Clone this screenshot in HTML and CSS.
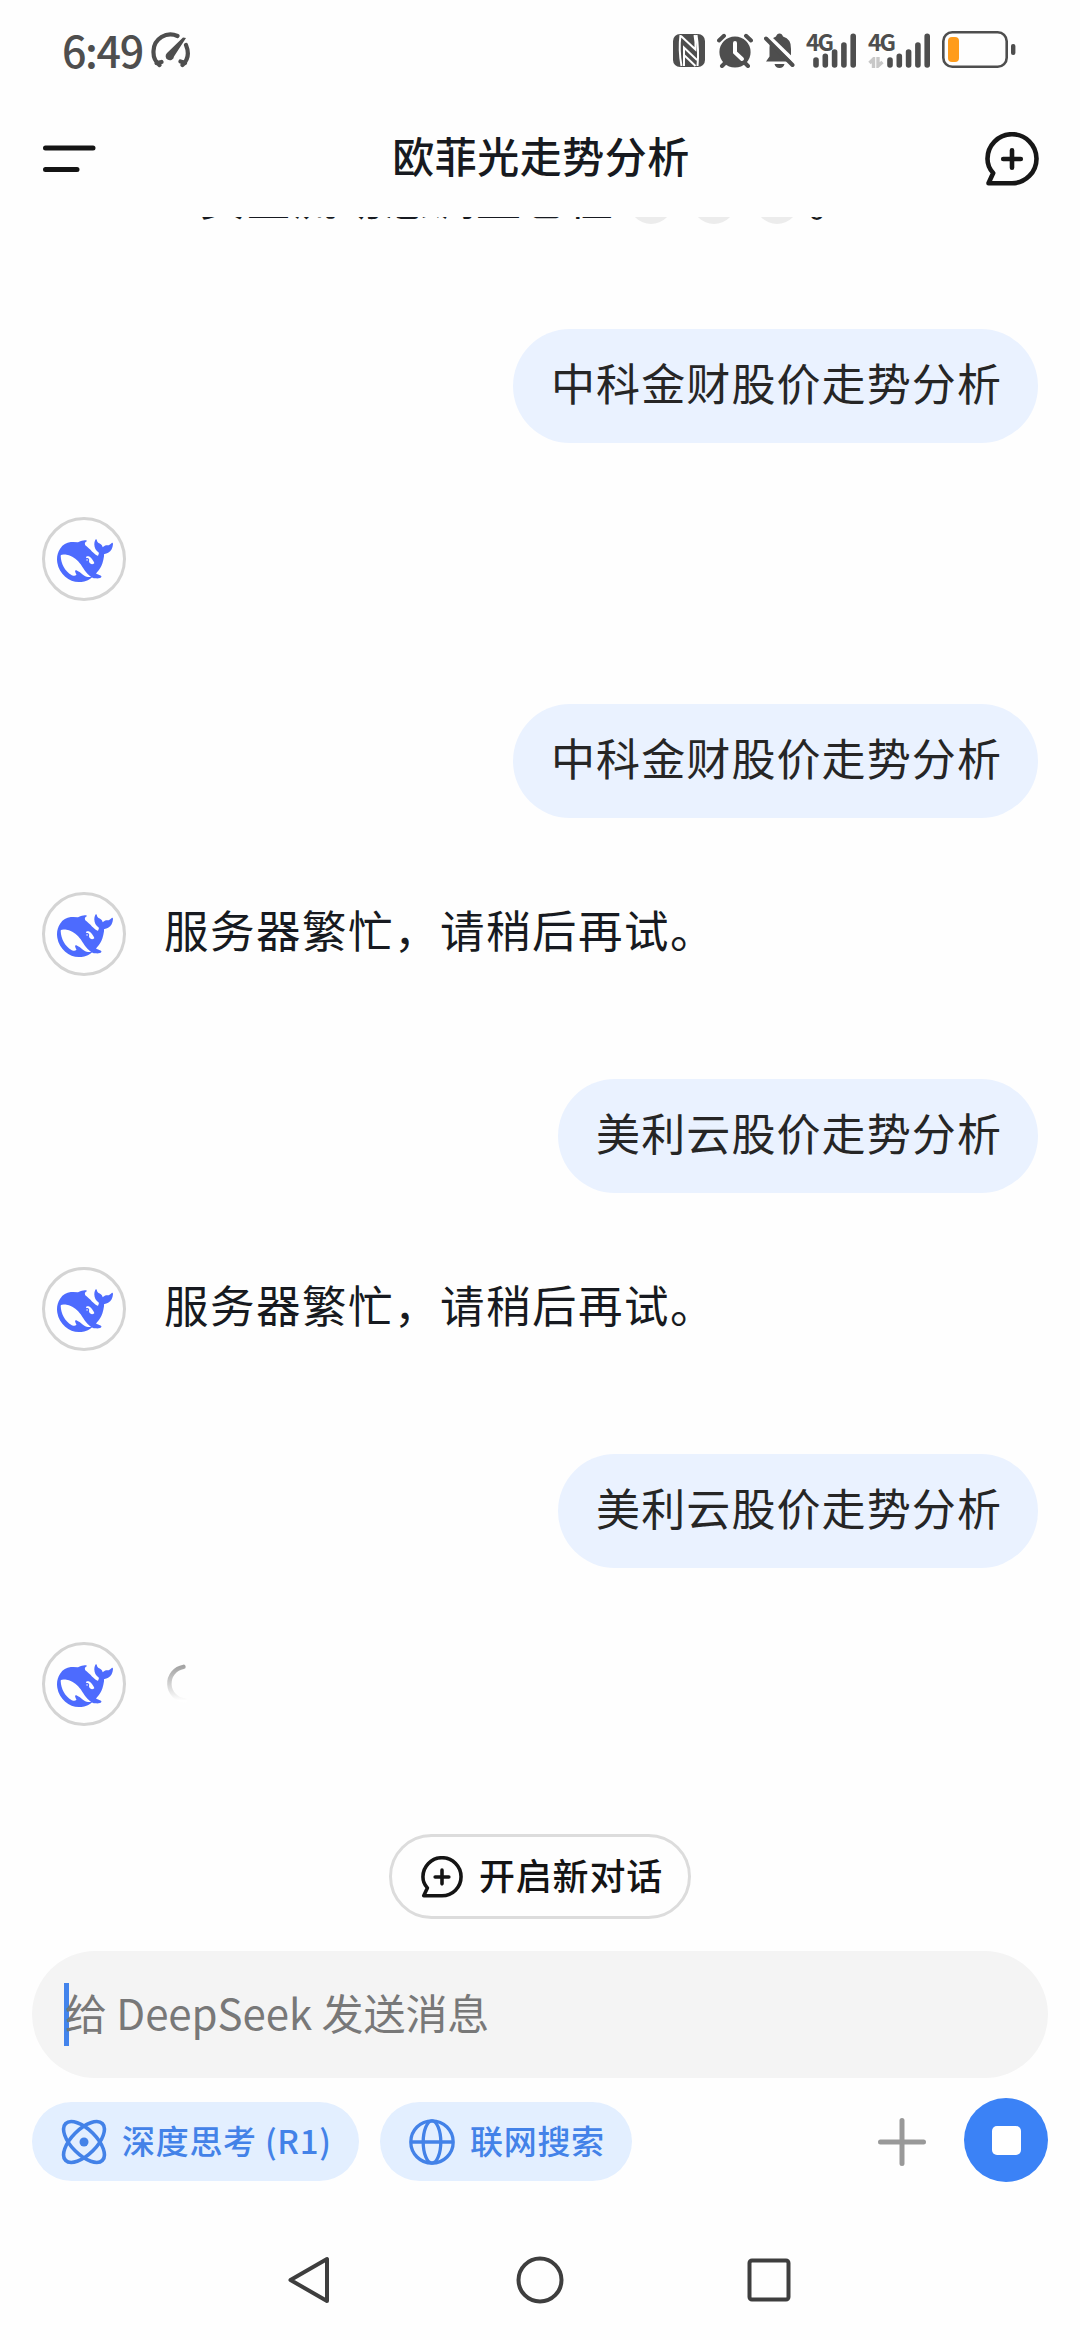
FILE: index.html
```html
<!DOCTYPE html>
<html lang="zh-CN">
<head>
<meta charset="utf-8">
<title>欧菲光走势分析</title>
<link rel="stylesheet" href="styles.css">
</head>
<body>
<svg class="defs" width="0" height="0">
  <symbol id="whale" viewBox="0 0 24 24" preserveAspectRatio="none"><path d="M23.748 4.482c-.254-.124-.364.113-.512.234-.051.039-.094.09-.137.136-.372.397-.806.657-1.373.626-.829-.046-1.537.214-2.163.848-.133-.782-.575-1.248-1.247-1.548-.352-.156-.708-.311-.955-.65-.172-.241-.219-.51-.305-.774-.055-.16-.11-.323-.293-.35-.2-.031-.278.136-.356.276-.313.572-.434 1.202-.422 1.84.027 1.436.633 2.58 1.838 3.393.137.093.172.187.129.323-.082.28-.18.552-.266.833-.055.179-.137.217-.329.14a5.526 5.526 0 01-1.736-1.18c-.857-.828-1.631-1.742-2.597-2.458a11.365 11.365 0 00-.689-.471c-.985-.957.13-1.743.388-1.836.27-.098.093-.432-.779-.428-.872.004-1.67.295-2.687.684a3.055 3.055 0 01-.465.137 9.597 9.597 0 00-2.883-.102c-1.885.21-3.39 1.102-4.497 2.623C.082 8.606-.231 10.684.152 12.85c.403 2.284 1.569 4.175 3.36 5.653 1.858 1.533 3.997 2.284 6.438 2.14 1.482-.085 3.133-.284 4.994-1.86.47.234.962.327 1.78.397.63.059 1.236-.03 1.705-.128.735-.156.684-.837.419-.961-2.155-1.004-1.682-.595-2.113-.926 1.096-1.296 2.746-2.642 3.392-7.003.05-.347.007-.565 0-.845-.004-.17.035-.237.23-.256a4.173 4.173 0 001.545-.475c1.396-.763 1.96-2.015 2.093-3.517.02-.23-.004-.467-.247-.588zM11.581 18c-2.089-1.642-3.102-2.183-3.52-2.16-.392.024-.321.471-.235.763.09.288.207.486.371.739.114.167.192.416-.113.603-.673.416-1.842-.14-1.897-.167-1.361-.802-2.5-1.86-3.301-3.307-.774-1.393-1.224-2.887-1.298-4.482-.02-.386.093-.522.477-.592a4.696 4.696 0 011.529-.039c2.132.312 3.946 1.265 5.468 2.774.868.86 1.525 1.887 2.202 2.891.72 1.066 1.494 2.082 2.48 2.914.348.292.625.514.891.677-.802.09-2.14.11-3.054-.614zm1-6.44a.306.306 0 01.415-.287.302.302 0 01.2.288.306.306 0 01-.31.307.303.303 0 01-.304-.308zm3.11 1.596c-.2.081-.399.151-.59.16a1.245 1.245 0 01-.798-.254c-.274-.23-.47-.358-.552-.758a1.73 1.73 0 01.016-.588c.07-.327-.008-.537-.239-.727-.187-.156-.426-.199-.688-.199a.559.559 0 01-.254-.078c-.11-.054-.2-.19-.114-.358.028-.054.16-.186.192-.21.356-.202.767-.136 1.146.016.352.144.618.408 1.001.782.391.451.462.576.685.914.176.265.336.537.445.848.067.195-.019.354-.25.452z"/></symbol>
  <symbol id="newchat" viewBox="0 0 54 54"><path d="M3.5 51.2L8.2 41Q2.5 35 2.5 27A24.5 24.5 0 1 1 27 51.2Z M27 18.2v17.6M18.2 27h17.6" fill="none" stroke="currentColor" stroke-width="4.6" stroke-linecap="round" stroke-linejoin="round"/></symbol>
  <symbol id="bars" viewBox="0 0 44 35"><path d="M3 27v5M12.3 23.2v8.800M21.600 19v13M30.900 12v20M40.200 3.400v28.600" stroke="currentColor" stroke-width="5.6" stroke-linecap="round"/></symbol>
</svg>
<div class="screen">
  <header class="status">
    <span class="time">6:49</span>
    <svg class="gauge" viewBox="0 0 40 36"><path d="M8.500 33Q2 28 2.500 19A17 17 0 0 1 26.500 4M35 13Q40 25 31.500 33M5.500 31l5-1M34 31l-4.500-1.500" fill="none" stroke="currentColor" stroke-width="4.200" stroke-linecap="round"/><path d="M35 6L23 24.500a4.200 4.200 0 1 1-7-3.500L32 5.500z" fill="currentColor"/></svg>
    <div class="sysicons">
      <svg class="nfc" viewBox="0 0 32 33"><rect width="32" height="33" rx="7" fill="currentColor"/><path d="M7.500 1Q5.500 16 8.500 32M8 2L22.500 15.500Q23 8 21.500 1M24.500 32Q26 16 23.500 1M11 32V13.500L24 26M11 21L22.500 32" fill="none" stroke="#fff" stroke-width="2"/></svg>
      <svg class="alarm" viewBox="0 0 36 35"><circle cx="18" cy="19" r="15.600" fill="currentColor"/><path d="M2 7.500L7 2.800M34 7.500L29 2.800M5 33l5-5M31 33l-5-5" stroke="currentColor" stroke-width="4" stroke-linecap="round"/><path d="M18 10v9.500l7 6.500" fill="none" stroke="#fff" stroke-width="4" stroke-linecap="round"/></svg>
      <svg class="bell" viewBox="0 0 31 35"><path d="M2 28.500l3.500-5V15Q5.500 5.500 12 3.500Q13 .5 15.500 .5T19 3.500Q27.500 6 27 16v7l3 5.500zM10.500 31h10Q19.500 35 15.500 35T10.500 31z" fill="currentColor"/><path d="M3.500 2.500L31 29" stroke="#fff" stroke-width="4"/><path d="M2 5.500L28.500 32" stroke="currentColor" stroke-width="4" stroke-linecap="round"/></svg>
      <div class="signal"><span class="net">4G</span><svg class="bars"><use href="#bars"/></svg></div>
      <div class="signal second"><span class="net">4G</span><svg class="updown" viewBox="0 0 16 11"><path d="M5.500 11V2L1.500 6M10 0v9L14.500 5" fill="none" stroke="#c8c8c8" stroke-width="3.400"/></svg><svg class="bars"><use href="#bars"/></svg></div>
      <svg class="battery" viewBox="0 0 74 38"><rect x="1.300" y="1.300" width="63.400" height="34.400" rx="9" fill="none" stroke="currentColor" stroke-width="2.600"/><rect x="6" y="6" width="11" height="25" rx="4" fill="#ff9c1b"/><rect x="69" y="13" width="4.400" height="11" rx="2" fill="currentColor"/></svg>
    </div>
  </header>
  <nav class="topbar">
    <svg class="menu" viewBox="0 0 54 28"><path d="M2.500 3h47.500M2.500 24.500h31.500" stroke="#141414" stroke-width="5" stroke-linecap="round"/></svg>
    <h1>欧菲光走势分析</h1>
    <svg class="newchat"><use href="#newchat"/></svg>
  </nav>
  <main class="chat">
    <div class="previous"><span>资金流动态调整仓位</span><i></i><i></i><i></i><span class="stop">。</span></div>
    <section class="turn"><p class="bubble">中科金财股价走势分析</p><div class="reply"><span class="avatar"><svg><use href="#whale"/></svg></span></div></section>
    <section class="turn"><p class="bubble">中科金财股价走势分析</p><div class="reply"><span class="avatar"><svg><use href="#whale"/></svg></span><p>服务器繁忙，请稍后再试。</p></div></section>
    <section class="turn"><p class="bubble">美利云股价走势分析</p><div class="reply"><span class="avatar"><svg><use href="#whale"/></svg></span><p>服务器繁忙，请稍后再试。</p></div></section>
    <section class="turn"><p class="bubble">美利云股价走势分析</p><div class="reply"><span class="avatar"><svg><use href="#whale"/></svg></span><svg class="spinner" viewBox="0 0 26 40"><defs><linearGradient id="fade" x1="0" y1="0" x2="0" y2="1"><stop offset="0" stop-color="#a4a4a4"/><stop offset="1" stop-color="#fff"/></linearGradient></defs><path d="M18.500 2.800A17 17 0 0 0 20 36.500" fill="none" stroke="url(#fade)" stroke-width="4.400" stroke-linecap="round"/></svg></div></section>
  </main>
  <button class="start"><svg><use href="#newchat"/></svg><span>开启新对话</span></button>
  <div class="input"><span class="placeholder">给 DeepSeek 发送消息</span></div>
  <div class="tools">
    <span class="chip"><svg class="atom" viewBox="0 0 46 46" fill="none" stroke="currentColor" stroke-width="3.600"><ellipse cx="23" cy="23" rx="26" ry="12.500" transform="rotate(45 23 23)"/><ellipse cx="23" cy="23" rx="26" ry="12.500" transform="rotate(-45 23 23)"/><circle cx="23" cy="23" r="4.500" fill="currentColor" stroke="none"/></svg><span>深度思考 (R1)</span></span>
    <span class="chip web"><svg class="globe" viewBox="0 0 46 46" fill="none" stroke="currentColor" stroke-width="3.300"><circle cx="23" cy="23" r="21.200"/><ellipse cx="23" cy="23" rx="8.800" ry="21.200"/><path d="M2 23h42"/></svg><span>联网搜索</span></span>
    <svg class="plus" viewBox="0 0 48 48"><path d="M24 2.500v43M2.500 24h43" stroke="#999" stroke-width="5" stroke-linecap="round"/></svg>
    <span class="halt"><i></i></span>
  </div>
  <footer class="sysnav">
    <svg viewBox="0 0 48 48"><path d="M40 3V45L3.500 24z"/></svg>
    <svg viewBox="0 0 48 48"><circle cx="24" cy="24" r="21.500"/></svg>
    <svg viewBox="0 0 48 48"><rect x="4.500" y="4.500" width="39" height="39" rx="2.500"/></svg>
  </footer>
</div>
</body>
</html>
```
FILE: styles.css
```css
* { box-sizing: border-box; }
body { margin: 0; background: #fefefe; font-family: "Noto Sans CJK SC", "Noto Sans", sans-serif; color: #171a20; }
p, h1 { margin: 0; }
svg { display: block; flex: none; }
.defs { position: absolute; }
.screen { width: 1080px; height: 2340px; display: flex; flex-direction: column; overflow: hidden; }

.status { height: 100px; padding: 0 64px 0 62px; display: flex; align-items: center; color: #4e4e4e; }
.time { font: 500 43px/60px "Noto Sans CJK SC", sans-serif; width: 89px; height: 62px; letter-spacing: -1.4px; }
.gauge { width: 40px; height: 36px; }
.sysicons { margin-left: auto; display: flex; align-items: center; }
.nfc { width: 32px; height: 33px; margin-right: 12px; }
.alarm { width: 36px; height: 35px; margin-right: 11px; }
.bell { width: 31px; height: 35px; margin-right: 11px; }
.signal { width: 51px; height: 35px; position: relative; margin-right: 11px; display: flex; justify-content: flex-end; }
.signal.second { width: 63px; }
.net { position: absolute; left: 0; top: -2px; font: 700 23px/20px "Noto Sans CJK SC", sans-serif; letter-spacing: -2px; }
.bars { width: 44px; height: 35px; }
.updown { position: absolute; left: 0; bottom: 0; width: 16px; height: 11px; }
.battery { width: 74px; height: 38px; }

.topbar { height: 117px; padding: 0 41px 0 43px; display: flex; justify-content: space-between; align-items: center; flex: none; }
.menu { width: 54px; height: 28px; }
.topbar h1 { font-size: 42px; line-height: 60px; font-weight: 500; letter-spacing: .5px; padding-bottom: 7px; }
.newchat { width: 54px; height: 54px; color: #171717; }

.chat { height: 1617px; overflow: hidden; padding: 0 42px; flex: none; }
.previous { height: 112px; padding-left: 158px; display: flex; font-size: 45px; letter-spacing: 1px; line-height: 60px; }
.previous span { margin-top: -50px; }
.previous i { width: 44px; height: 44px; border-radius: 50%; background: #ececec; margin: -37px 0 0 19px; }
.previous i:first-of-type { margin-left: 15px; }
.previous .stop { margin: -49px 0 0 9px; }
.turn { height: 375px; display: flex; flex-direction: column; }
.bubble { align-self: flex-end; height: 114px; border-radius: 57px; background: #eaf2ff; padding: 0 36px 0 38px; font-size: 44px; line-height: 107px; letter-spacing: 1.1px; color: #262626; }
.reply { margin-top: 74px; display: flex; height: 84px; align-items: center; }
.avatar { width: 84px; height: 84px; border-radius: 50%; border: 3px solid #d4d4d4; display: grid; place-items: center; color: #4d6bfe; margin-right: 38px; flex: none; }
.avatar svg { width: 56px; height: 58px; margin: 3px 0 0 2px; fill: currentColor; }
.reply p { font-size: 44.5px; letter-spacing: 1.5px; line-height: 76px; padding-bottom: 10px; }
.spinner { width: 26px; height: 40px; margin-left: 1px; }

.start { align-self: center; width: 302px; height: 85px; border: 3px solid #dcdcdc; border-radius: 43px; background: #fefefe; padding: 0 0 0 29px; display: flex; align-items: center; gap: 16px; font: 500 36px/50px "Noto Sans CJK SC", sans-serif; letter-spacing: .8px; color: #141414; flex: none; }
.start svg { width: 42px; height: 42px; }
.start span { padding-bottom: 5px; }
.input { margin: 32px 32px 0; height: 127px; border-radius: 64px; background: #f4f4f4; padding: 32px 32px 0; color: #787878; font-size: 42px; line-height: 57px; flex: none; }
.placeholder { display: block; height: 63px; border-left: 5px solid #4384ec; text-indent: -4px; letter-spacing: -.05px; }
.tools { margin: 20px 32px 0; height: 84px; display: flex; align-items: center; flex: none; }
.chip { width: 327px; height: 79px; border-radius: 40px; background: #e3efff; color: #4382e8; font-size: 33px; font-weight: 500; line-height: 50px; letter-spacing: .7px; padding-left: 29px; display: flex; align-items: center; gap: 15px; white-space: nowrap; margin-top: 3px; }
.chip svg { width: 46px; height: 46px; }
.chip span { padding-bottom: 3px; }
.web { width: 252px; margin-left: 21px; }
.plus { width: 48px; height: 48px; margin: 3px 38px 0 auto; }
.halt { width: 84px; height: 84px; border-radius: 50%; background: #3b82f6; display: grid; place-items: center; }
.halt i { width: 29px; height: 29px; border-radius: 5px; background: #fff; }
.sysnav { height: 158px; display: flex; justify-content: center; gap: 181px; padding-top: 74px; flex: none; }
.sysnav svg { width: 48px; height: 48px; fill: none; stroke: #3e3e3e; stroke-width: 4; stroke-linejoin: round; }
```
